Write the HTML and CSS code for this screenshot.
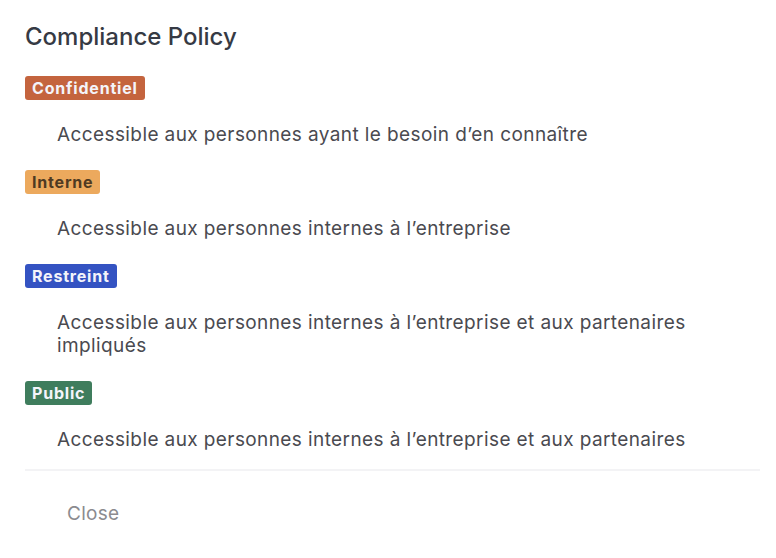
FILE: index.html
```html
<!DOCTYPE html>
<html lang="fr">
<head>
    <meta charset="UTF-8">
    <meta name="viewport" content="width=device-width, initial-scale=1.0">
    <title>Compliance Policy</title>
    <link rel="stylesheet" href="styles.css">
</head>
<body>

    <div class="modal">
        <div class="modal-body">
            <h2 class="modal-title">Compliance Policy</h2>

            <div class="level">
                <span class="badge badge-confidentiel">Confidentiel</span>
                <p class="level-text">Accessible aux personnes ayant le besoin d’en connaître</p>
            </div>

            <div class="level">
                <span class="badge badge-interne">Interne</span>
                <p class="level-text">Accessible aux personnes internes à l’entreprise</p>
            </div>

            <div class="level">
                <span class="badge badge-restreint">Restreint</span>
                <p class="level-text">Accessible aux personnes internes à l’entreprise et aux partenaires impliqués</p>
            </div>

            <div class="level">
                <span class="badge badge-public">Public</span>
                <p class="level-text">Accessible aux personnes internes à l’entreprise et aux partenaires</p>
            </div>
        </div>

        <div class="modal-footer">
            <button class="close-btn">Close</button>
        </div>
    </div>

</body>
</html>
```

FILE: styles.css
```css
body {
    margin: 0;
    font-family: Inter, "Noto Sans", Arial, sans-serif;
    background-color: #fff;
    color: #4a4a4f;
}

.modal {
    width: 776px;
    height: 558px;
    background-color: #fff;
}

.modal-body {
    padding: 22px 16px 0 25px;
}

.modal-title {
    margin: 0 0 24px 0;
    font-size: 24px;
    font-weight: 500;
    line-height: 30px;
    color: #363a44;
}

.level {
    margin-bottom: 24px;
}

.level:last-child {
    margin-bottom: 0;
}

.badge {
    display: inline-block;
    padding: 0 7px;
    height: 24px;
    line-height: 24px;
    border-radius: 3px;
    font-size: 16px;
    font-weight: 700;
    letter-spacing: 0.8px;
    color: #f4f4fa;
}

.badge-confidentiel {
    background-color: #c4643e;
}

.badge-interne {
    background-color: #eca95d;
    color: #4f3a22;
}

.badge-restreint {
    background-color: #3453c2;
}

.badge-public {
    background-color: #3f7d5d;
}

.level-text {
    margin: 23px 0 0 32px;
    font-size: 19px;
    line-height: 23px;
    letter-spacing: 0.4px;
    color: #4a4a50;
}

.modal-footer {
    margin: 18px 16px 0 25px;
    padding-top: 20px;
    border-top: 2px solid #f3f3f5;
}

.close-btn {
    margin-left: 26px;
    padding: 0 16px;
    height: 44px;
    border: none;
    background: none;
    font-family: inherit;
    font-size: 19px;
    letter-spacing: 0.3px;
    color: #8b8b8f;
    cursor: pointer;
}
```
